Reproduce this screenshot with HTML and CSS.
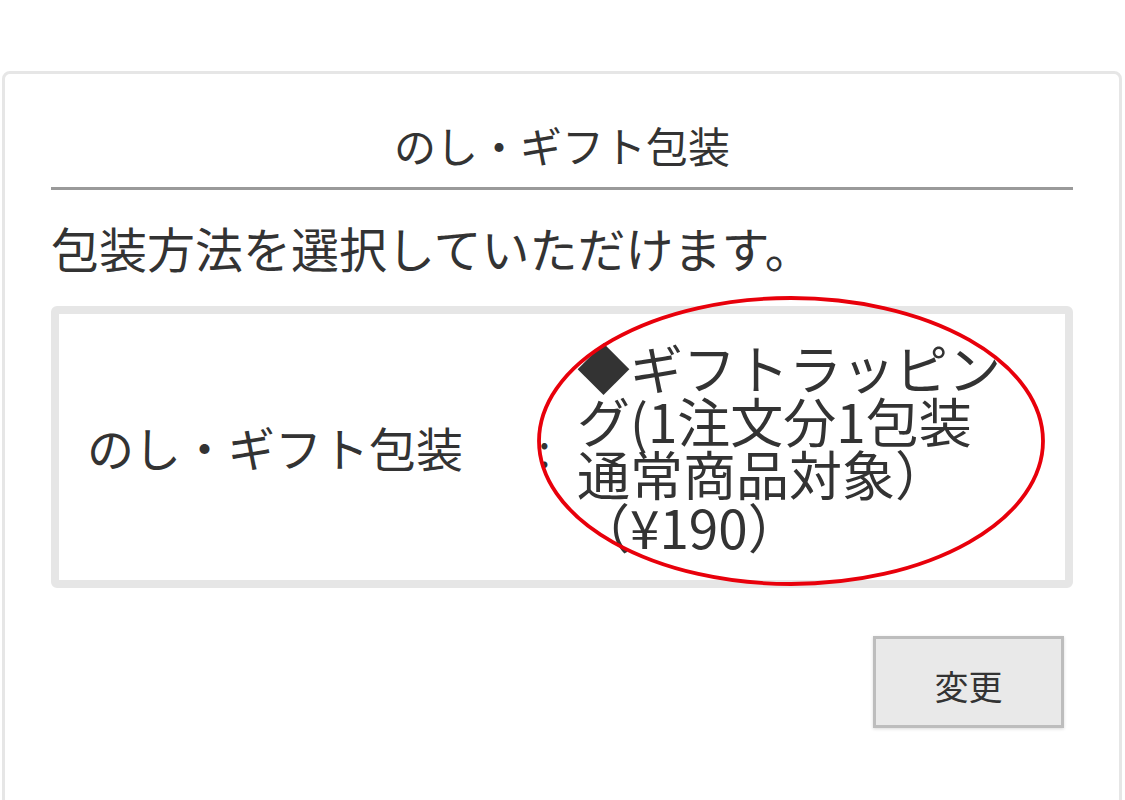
FILE: index.html
```html
<!DOCTYPE html>
<html lang="ja">
<head>
<meta charset="utf-8">
<link rel="stylesheet" href="styles.css">
</head>
<body>
<div class="card">
  <h2 class="title">のし・ギフト包装</h2>
  <p class="desc">包装方法を選択していただけます。</p>
  <div class="box">
    <div class="label">のし・ギフト包装</div>
    <div class="colon">:</div>
    <div class="value">◆ギフトラッピング(1注文分1包装通常商品対象）（¥190）</div>
  </div>
  <div class="actions">
    <button class="btn">変更</button>
  </div>
  <svg class="mark" width="520" height="300" viewBox="0 0 520 300">
    <ellipse cx="260" cy="150" rx="252" ry="143" fill="none" stroke="#e8000b" stroke-width="3.8"/>
  </svg>
</div>
</body>
</html>
```
FILE: styles.css
```css
html, body {
  margin: 0;
  padding: 0;
  background: #fff;
}
body {
  font-family: "Noto Sans CJK JP", "Noto Sans", sans-serif;
  color: #333;
}
.card {
  position: relative;
  margin: 71px 0 0 2px;
  width: 1120px;
  height: 760px;
  box-sizing: border-box;
  border: 3px solid #e6e6e6;
  border-radius: 8px;
  padding: 0 46px;
}
.title {
  margin: 0;
  padding: 42px 0 14px;
  font-size: 42px;
  font-weight: 400;
  line-height: 57px;
  text-align: center;
  border-bottom: 3px solid #9a9a9a;
}
.desc {
  margin: 0;
  padding: 24px 0 0 0;
  font-size: 48px;
  line-height: 66px;
}
.box {
  margin-top: 26px;
  border: 8px solid #e6e6e6;
  border-radius: 6px;
  display: flex;
  align-items: center;
  padding: 0 0 0 28px;
  box-sizing: border-box;
  height: 282px;
}
.label {
  width: 451px;
  font-size: 47px;
  line-height: 56px;
}
.colon {
  width: 39px;
  font-size: 46px;
  line-height: 56px;
}
.value {
  width: 432px;
  font-size: 53px;
  line-height: 53px;
}
.actions {
  display: flex;
  justify-content: flex-end;
  padding: 48px 9px 0 0;
}
.btn {
  width: 191px;
  height: 92px;
  background: #e9e9e9;
  border: 3px solid #bdbdbd;
  box-shadow: 0 1px 3px rgba(0,0,0,0.15);
  font-family: "Noto Sans CJK JP", sans-serif;
  font-size: 34px;
  color: #333;
  padding: 6px 0 0;
}
.mark {
  position: absolute;
  left: 526px;
  top: 217px;
}
```
